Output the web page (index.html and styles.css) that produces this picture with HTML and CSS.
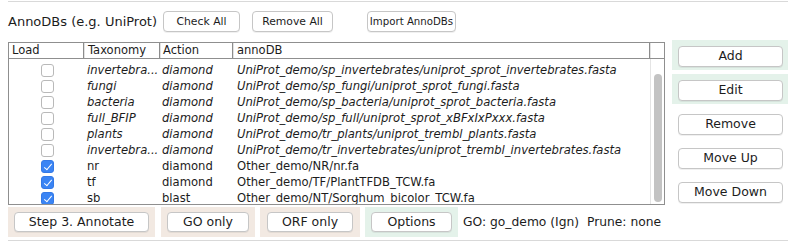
FILE: index.html
```html
<!DOCTYPE html>
<html lang="en">
<head>
    <meta charset="UTF-8">
    <title>AnnoDBs</title>
    <link rel="stylesheet" href="styles.css">
</head>
<body>

<div class="pane">
    <div class="rule top"></div>

    <!-- 标题 + 按钮 -->
    <div class="head_row">
        <span class="title">AnnoDBs (e.g. UniProt)</span>
        <button class="btn small check_all">Check All</button>
        <button class="btn small remove_all">Remove All</button>
        <button class="btn small import">Import AnnoDBs</button>
    </div>

    <div class="main">
        <!-- 表格 -->
        <div class="table">
            <div class="thead">
                <div class="th col_load">Load</div>
                <div class="th col_tax">Taxonomy</div>
                <div class="th col_act">Action</div>
                <div class="th col_db">annoDB</div>
                <div class="th_blank"></div>
            </div>
            <div class="tbody">
                <div class="rows">
                    <div class="row it"><span class="col_load"><span class="cb"></span></span><span class="col_tax">invertebra...</span><span class="col_act">diamond</span><span class="col_db">UniProt_demo/sp_invertebrates/uniprot_sprot_invertebrates.fasta</span></div>
                    <div class="row it"><span class="col_load"><span class="cb"></span></span><span class="col_tax">fungi</span><span class="col_act">diamond</span><span class="col_db">UniProt_demo/sp_fungi/uniprot_sprot_fungi.fasta</span></div>
                    <div class="row it"><span class="col_load"><span class="cb"></span></span><span class="col_tax">bacteria</span><span class="col_act">diamond</span><span class="col_db">UniProt_demo/sp_bacteria/uniprot_sprot_bacteria.fasta</span></div>
                    <div class="row it"><span class="col_load"><span class="cb"></span></span><span class="col_tax">full_BFIP</span><span class="col_act">diamond</span><span class="col_db">UniProt_demo/sp_full/uniprot_sprot_xBFxIxPxxx.fasta</span></div>
                    <div class="row it"><span class="col_load"><span class="cb"></span></span><span class="col_tax">plants</span><span class="col_act">diamond</span><span class="col_db">UniProt_demo/tr_plants/uniprot_trembl_plants.fasta</span></div>
                    <div class="row it"><span class="col_load"><span class="cb"></span></span><span class="col_tax">invertebra...</span><span class="col_act">diamond</span><span class="col_db">UniProt_demo/tr_invertebrates/uniprot_trembl_invertebrates.fasta</span></div>
                    <div class="row"><span class="col_load"><span class="cb on"></span></span><span class="col_tax">nr</span><span class="col_act">diamond</span><span class="col_db">Other_demo/NR/nr.fa</span></div>
                    <div class="row"><span class="col_load"><span class="cb on"></span></span><span class="col_tax">tf</span><span class="col_act">diamond</span><span class="col_db">Other_demo/TF/PlantTFDB_TCW.fa</span></div>
                    <div class="row"><span class="col_load"><span class="cb on"></span></span><span class="col_tax">sb</span><span class="col_act">blast</span><span class="col_db">Other_demo/NT/Sorghum_bicolor_TCW.fa</span></div>
                </div>
                <div class="scroll"><div class="thumb"></div></div>
            </div>
        </div>

        <!-- 右侧按钮 -->
        <div class="side">
            <div class="slot green"><button class="btn wide">Add</button></div>
            <div class="slot green"><button class="btn wide">Edit</button></div>
            <div class="slot"><button class="btn wide">Remove</button></div>
            <div class="slot"><button class="btn wide">Move Up</button></div>
            <div class="slot"><button class="btn wide">Move Down</button></div>
        </div>
    </div>

    <!-- 底部 -->
    <div class="foot">
        <div class="box beige step"><button class="btn">Step 3. Annotate</button></div>
        <div class="box beige go"><button class="btn">GO only</button></div>
        <div class="box beige orf"><button class="btn">ORF only</button></div>
        <div class="box green opt"><button class="btn">Options</button></div>
        <span class="status">GO: go_demo (Ign)&nbsp; Prune: none</span>
    </div>

    <div class="rule bottom"></div>
</div>

</body>
</html>
```

FILE: styles.css
```css
*{
    padding: 0;
    margin: 0;
    box-sizing: border-box;
}
body{
    background: #fff;
    font-family: "DejaVu Sans", "Liberation Sans", sans-serif;
    color: #1c1c1c;
}
.pane{
    padding: 0 8px;
    width: 796px;
}
.rule{
    height: 1px;
    background: #d9d9d9;
    width: 780px;
}
.rule.top{
    margin-top: 1px;
}
.rule.bottom{
    margin-top: 3px;
}

/* 按钮 */
.btn{
    font-family: inherit;
    background: #fff;
    border: 1px solid #c6c6c6;
    border-radius: 4px;
    box-shadow: 0 1px 0 rgba(0,0,0,.06);
    color: #1c1c1c;
    font-size: 12.5px;
    height: 20px;
    line-height: 18px;
    padding: 0;
    white-space: nowrap;
    text-align: center;
}

/* 标题行 */
.head_row{
    display: flex;
    align-items: center;
    height: 21px;
    margin-top: 9px;
}
.title{
    font-size: 13px;
    width: 155px;
}
.btn.small{
    font-size: 10.8px;
    height: 21px;
}
.check_all{ width: 77px; }
.remove_all{ width: 81px; margin-left: 12px; }
.btn.import{ width: 89px; margin-left: 34px; font-size: 10.2px; }

.main{
    display: flex;
    margin-top: 8px;
}

/* 表格 */
.table{
    width: 657px;
    height: 163px;
    margin-top: 2px;
    border: 1px solid #8f8f8f;
    font-size: 11.6px;
    display: flex;
    flex-direction: column;
}
.thead{
    display: flex;
    height: 16px;
    border-bottom: 1px solid #8f8f8f;
    line-height: 15px;
    font-size: 11.5px;
}
.th{
    padding-left: 3px;
    border-right: 1px solid #8c8c8c;
    box-shadow: 1px 0 0 #e2e2e2;
}
.col_load{ width: 75px; }
.col_tax{ width: 76px; }
.col_act{ width: 73px; }
.col_db{ width: 417px; }
.th_blank{ flex: 1; }
.th.col_tax, .th.col_db{ padding-left: 4px; }

.tbody{
    flex: 1;
    display: flex;
    overflow: hidden;
}
.rows{
    width: 641px;
    padding-top: 3px;
}
.row{
    display: flex;
    height: 16px;
    line-height: 16px;
    white-space: nowrap;
}
.row.it .col_tax, .row.it .col_act, .row.it .col_db{
    font-style: italic;
}
.row .col_load{
    display: flex;
    align-items: center;
    justify-content: center;
    padding-left: 2px;
}
.row .col_tax{ padding-left: 3px; }
.row .col_act{ padding-left: 2px; }
.row .col_db{ padding-left: 4px; }

/* 复选框 */
.cb{
    width: 13px;
    height: 13px;
    border: 1px solid #b9b9b9;
    border-radius: 3px;
    background: #fff;
    position: relative;
}
.cb.on{
    background: #3a84f4;
    border-color: #3479e6;
}
.cb.on::after{
    content: "";
    position: absolute;
    left: 4px;
    top: 1px;
    width: 3px;
    height: 7px;
    border: solid #fff;
    border-width: 0 1.6px 1.6px 0;
    transform: rotate(40deg);
}

/* 滚动条 */
.scroll{
    flex: 1;
    border-left: 1px solid #e4e4e4;
    padding: 15px 0 1px 3px;
}
.thumb{
    width: 8px;
    height: 128px;
    border-radius: 4px;
    background: #c3c3c3;
}

/* 右侧 */
.side{
    margin-left: 7px;
    display: flex;
    flex-direction: column;
    gap: 4px;
}
.slot{
    width: 116px;
    height: 30px;
    padding: 5px 0 0 6px;
}
.green{
    background: #e4f2ea;
}
.beige{
    background: #f2e9e2;
}
.btn.wide{
    width: 105px;
    height: 21px;
    font-size: 12.5px;
}

/* 底部 */
.foot{
    display: flex;
    align-items: flex-start;
    margin-top: 1px;
    height: 30px;
}
.box{
    height: 30px;
    padding: 4px 0 0 6px;
}
.step{ width: 147px; }
.step .btn{ width: 135px; }
.go{ width: 94px; margin-left: 6px; }
.go .btn{ width: 82px; }
.orf{ width: 100px; margin-left: 5px; padding-left: 7px; }
.orf .btn{ width: 86px; }
.opt{ width: 93px; margin-left: 5px; }
.opt .btn{ width: 81px; }
.status{
    font-size: 12.3px;
    line-height: 30px;
    margin-left: 5px;
}
```
